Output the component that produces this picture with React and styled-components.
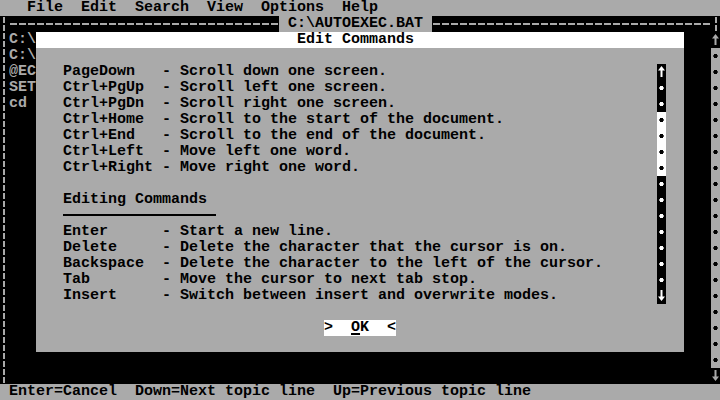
import React from "react";
import styled, { createGlobalStyle } from "styled-components";

// VGA text mode: 80x25 cells of 9x16 pixels
const GRAY = "#aaaaaa";
const WHITE = "#ffffff";
const BLACK = "#000000";

const GlobalStyle = createGlobalStyle`
  html, body {
    margin: 0;
    padding: 0;
    background: #000;
  }
`;

const Screen = styled.div`
  width: 720px;
  height: 400px;
  overflow: hidden;
  display: flex;
  flex-direction: column;
  background: ${BLACK};
  color: ${GRAY};
  font-family: "Liberation Mono", "DejaVu Sans Mono", monospace;
  font-size: 15px;
  line-height: 16px;
  font-weight: bold;
  white-space: pre;
`;

const MenuBar = styled.nav`
  height: 16px;
  flex: 0 0 16px;
  display: flex;
  gap: 18px;
  padding-left: 27px;
  background: ${GRAY};
  color: ${BLACK};
`;

const MenuItem = styled.span`
  width: ${(p) => p.$len * 9}px;
`;

const TitleRow = styled.div`
  height: 16px;
  flex: 0 0 16px;
  display: flex;
`;

const VBar = styled.div`
  width: 9px;
  flex: 0 0 9px;
  height: ${(p) => (p.$height ? `${p.$height}px` : "100%")};
  background-image: repeating-linear-gradient(
    to bottom,
    ${GRAY} 0 6px,
    transparent 6px 8px
  );
  background-size: 2px 100%;
  background-position: ${(p) => p.$x || 3}px 1px;
  background-repeat: no-repeat;
`;

const HRule = styled.div`
  flex: ${(p) => (p.$width ? `0 0 ${p.$width}px` : "1")};
  background-image: linear-gradient(
    90deg,
    transparent 0 1px,
    ${GRAY} 1px 8px,
    transparent 8px
  );
  background-size: 9px 2px;
  background-position: 0 7px;
  background-repeat: repeat-x;
`;

const WindowTitle = styled.div`
  flex: 0 0 153px;
  background: ${GRAY};
  color: ${BLACK};
`;

const EditorBody = styled.div`
  flex: 1;
  display: flex;
`;

const Gutter = styled.div`
  width: 27px;
  flex: 0 0 27px;
  overflow: hidden;
  display: flex;
  flex-direction: column;
`;

const TextLine = styled.div`
  height: 16px;
  flex: 0 0 16px;
`;

const DialogSlot = styled.div`
  width: 648px;
  flex: 0 0 648px;
`;

const Gap = styled.div`
  width: 27px;
  flex: 0 0 27px;
`;

const ScrollColumn = styled.div`
  width: 9px;
  flex: 0 0 9px;
  display: flex;
  flex-direction: column;
`;

const ArrowCell = styled.div`
  height: 16px;
  flex: 0 0 16px;
  background: ${(p) => p.$bg};
  svg {
    display: block;
  }
`;

const Track = styled.div`
  height: ${(p) => (p.$rows ? `${p.$rows * 16}px` : "auto")};
  flex: ${(p) => (p.$rows ? `0 0 ${p.$rows * 16}px` : "1")};
  background-color: ${(p) => p.$bg};
  background-image: radial-gradient(
    circle at 4.5px 8px,
    ${(p) => p.$dot} 1.9px,
    transparent 2.4px
  );
  background-size: 9px 16px;
`;

const Dialog = styled.section`
  height: 320px;
  display: flex;
  flex-direction: column;
  background: ${GRAY};
  color: ${BLACK};
`;

const DialogTitle = styled.header`
  height: 16px;
  flex: 0 0 16px;
  padding-left: 261px;
  background: ${WHITE};
`;

const DialogBody = styled.div`
  flex: 1;
  display: flex;
  flex-direction: column;
  padding-top: 16px;
`;

const HelpPane = styled.div`
  height: 240px;
  display: flex;
`;

const HelpText = styled.div`
  width: 621px;
  flex: 0 0 621px;
  box-sizing: border-box;
  padding-left: 27px;
  display: flex;
  flex-direction: column;
`;

const SectionRule = styled.div`
  height: 16px;
  flex: 0 0 16px;
  &::after {
    content: "";
    display: block;
    width: 153px;
    height: 2px;
    margin-top: 6px;
    background: ${BLACK};
  }
`;

const ButtonRow = styled.div`
  height: 16px;
  margin-top: 16px;
  padding-left: 288px;
  display: flex;
`;

const OkButton = styled.div`
  width: 72px;
  background: ${WHITE};
  color: ${BLACK};
`;

const Hotkey = styled.span`
  text-decoration: underline;
  text-decoration-thickness: 2px;
  text-underline-offset: 2px;
`;

const StatusBar = styled.footer`
  height: 16px;
  flex: 0 0 16px;
  padding-left: 9px;
  background: ${GRAY};
  color: ${BLACK};
`;

const Arrow = ({ dir, color, bg }) => (
  <ArrowCell $bg={bg}>
    <svg width="9" height="16" viewBox="0 0 9 16">
      <polygon
        fill={color}
        transform={dir === "down" ? "rotate(180 4.5 7.5)" : undefined}
        points="4.5,2 8,6.5 5.5,6.5 5.5,13 3.5,13 3.5,6.5 1,6.5"
      />
    </svg>
  </ArrowCell>
);

const menu = ["File", "Edit", "Search", "View", "Options", "Help"];
const gutterLines = ["C:\\", "C:\\", "@EC", "SET", "cd"];

const navigation = [
  "PageDown   - Scroll down one screen.",
  "Ctrl+PgUp  - Scroll left one screen.",
  "Ctrl+PgDn  - Scroll right one screen.",
  "Ctrl+Home  - Scroll to the start of the document.",
  "Ctrl+End   - Scroll to the end of the document.",
  "Ctrl+Left  - Move left one word.",
  "Ctrl+Right - Move right one word.",
];

const editing = [
  "Enter      - Start a new line.",
  "Delete     - Delete the character that the cursor is on.",
  "Backspace  - Delete the character to the left of the cursor.",
  "Tab        - Move the cursor to next tab stop.",
  "Insert     - Switch between insert and overwrite modes.",
];

const App = () => {
  return (
    <>
      <GlobalStyle />
      <Screen>
        <MenuBar>
          {menu.map((m) => (
            <MenuItem key={m} $len={m.length}>
              {m}
            </MenuItem>
          ))}
        </MenuBar>

        <TitleRow>
          <VBar $height={16} />
          <HRule $width={270} />
          <WindowTitle> C:\AUTOEXEC.BAT </WindowTitle>
          <HRule />
          <VBar $height={16} $x={4} />
        </TitleRow>

        <EditorBody>
          <VBar />
          <Gutter>
            {gutterLines.map((l, i) => (
              <TextLine key={i}>{l}</TextLine>
            ))}
          </Gutter>

          <DialogSlot>
            <Dialog>
              <DialogTitle>Edit Commands</DialogTitle>
              <DialogBody>
                <HelpPane>
                  <HelpText>
                    {navigation.map((l) => (
                      <TextLine key={l}>{l}</TextLine>
                    ))}
                    <TextLine />
                    <TextLine>Editing Commands</TextLine>
                    <SectionRule />
                    {editing.map((l) => (
                      <TextLine key={l}>{l}</TextLine>
                    ))}
                  </HelpText>
                  <ScrollColumn>
                    <Arrow dir="up" color={WHITE} bg={BLACK} />
                    <Track $rows={2} $bg={BLACK} $dot={WHITE} />
                    <Track $rows={4} $bg={WHITE} $dot={BLACK} />
                    <Track $rows={7} $bg={BLACK} $dot={WHITE} />
                    <Arrow dir="down" color={WHITE} bg={BLACK} />
                  </ScrollColumn>
                </HelpPane>
                <ButtonRow>
                  <OkButton>
                    {">  "}
                    <Hotkey>O</Hotkey>
                    {"K  <"}
                  </OkButton>
                </ButtonRow>
              </DialogBody>
            </Dialog>
          </DialogSlot>

          <Gap />

          <ScrollColumn>
            <Arrow dir="up" color={GRAY} bg={BLACK} />
            <Track $bg={GRAY} $dot={BLACK} />
            <Arrow dir="down" color={GRAY} bg={BLACK} />
          </ScrollColumn>
        </EditorBody>

        <StatusBar>Enter=Cancel  Down=Next topic line  Up=Previous topic line</StatusBar>
      </Screen>
    </>
  );
};

export default App;
